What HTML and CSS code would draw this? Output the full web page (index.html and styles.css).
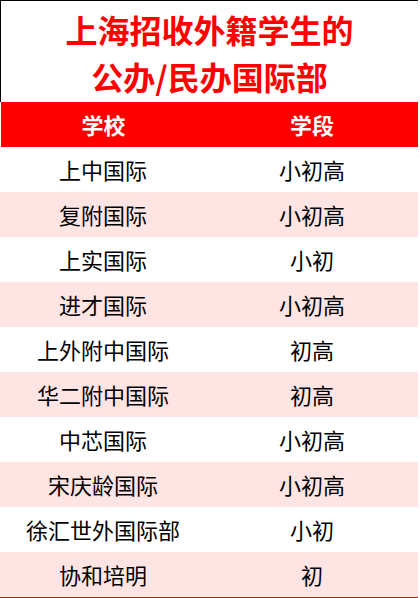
FILE: index.html
```html
<!DOCTYPE html>
<html lang="zh-CN">
<head>
<meta charset="utf-8">
<title>上海招收外籍学生的公办/民办国际部</title>
<link rel="stylesheet" href="styles.css">
</head>
<body>
<div class="sheet">
  <div class="title">上海招收外籍学生的<br>公办/民办国际部</div>
  <div class="table">
    <div class="row head"><div class="cell">学校</div><div class="cell">学段</div></div>
    <div class="row"><div class="cell">上中国际</div><div class="cell">小初高</div></div>
    <div class="row alt"><div class="cell">复附国际</div><div class="cell">小初高</div></div>
    <div class="row"><div class="cell">上实国际</div><div class="cell">小初</div></div>
    <div class="row alt"><div class="cell">进才国际</div><div class="cell">小初高</div></div>
    <div class="row"><div class="cell">上外附中国际</div><div class="cell">初高</div></div>
    <div class="row alt"><div class="cell">华二附中国际</div><div class="cell">初高</div></div>
    <div class="row"><div class="cell">中芯国际</div><div class="cell">小初高</div></div>
    <div class="row alt"><div class="cell">宋庆龄国际</div><div class="cell">小初高</div></div>
    <div class="row"><div class="cell">徐汇世外国际部</div><div class="cell">小初</div></div>
    <div class="row alt"><div class="cell">协和培明</div><div class="cell">初</div></div>
  </div>
</div>
</body>
</html>
```

FILE: styles.css
```css
html, body {
  margin: 0;
  padding: 0;
  background: #ffffff;
}
body {
  font-family: "Noto Sans CJK SC", "Noto Sans", sans-serif;
  width: 420px;
  height: 598px;
  overflow: hidden;
}
.sheet {
  width: 418px;
}
.title {
  box-sizing: border-box;
  height: 102px;
  border-top: 1px solid #000000;
  border-left: 1px solid #000000;
  padding-top: 5px;
  text-align: center;
  color: #ff0000;
  font-size: 32px;
  font-weight: 700;
  line-height: 47px;
}
.table {
  border-bottom: 1px solid #e00000;
}
.row {
  display: grid;
  grid-template-columns: 206px 1fr;
  height: 45px;
  align-items: center;
  font-size: 22px;
  color: #000000;
}
.row .cell {
  text-align: center;
  line-height: 45px;
}
.row.head {
  background: #ff0000;
  color: #ffffff;
  font-weight: 700;
  margin-left: 1px;
  grid-template-columns: 205px 1fr;
}
.row.alt {
  background: #ffe4e4;
}
```
